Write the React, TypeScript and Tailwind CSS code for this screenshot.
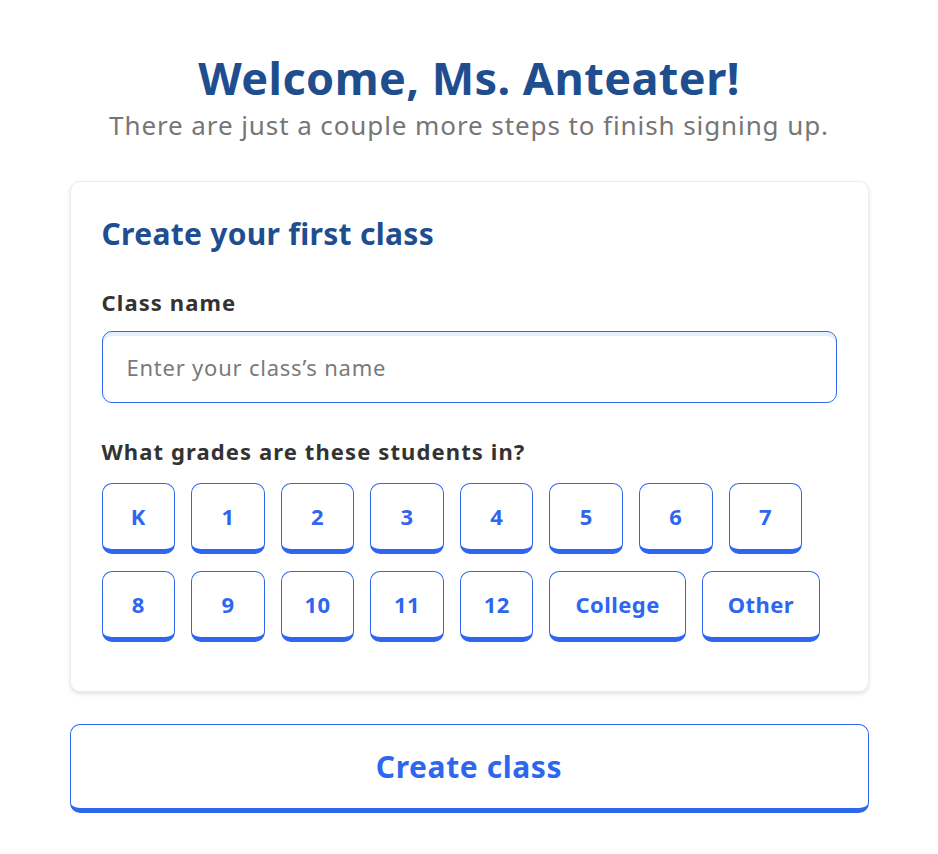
import { useState } from "react"

const grades = ["K", "1", "2", "3", "4", "5", "6", "7", "8", "9", "10", "11", "12", "College", "Other"]

function GradeButton({ label, active, onClick }: { label: string; active: boolean; onClick: () => void }) {
  const wide = label.length > 2
  return (
    <button
      onClick={onClick}
      className={`h-[71px] rounded-[10px] border border-b-[5px] border-[#2f66f0] text-[22px] font-bold tracking-[0.02em] ${
        wide ? "px-[25px]" : "w-[73.6px]"
      } ${active ? "bg-[#2f66f0] text-white" : "bg-white text-[#2f66f0]"}`}
    >
      {label}
    </button>
  )
}

export default function App() {
  const [name, setName] = useState("")
  const [selected, setSelected] = useState<string[]>([])

  const toggle = (g: string) => {
    setSelected((s) => (s.includes(g) ? s.filter((x) => x !== g) : [...s, g]))
  }

  return (
    <div className="min-h-[854px] bg-white font-['Noto_Sans','Lato',sans-serif]">
      <div className="mx-auto w-[799px] pt-[50px]">
        <h1 className="text-center text-[45px] font-bold leading-[56px] tracking-[0.01em] text-[#1f4e8f]">
          Welcome, Ms. Anteater!
        </h1>
        <p className="mt-[2px] text-center text-[26px] leading-[34px] tracking-[0.035em] text-[#767676]">
          There are just a couple more steps to finish signing up.
        </p>

        <div className="mt-[39px] rounded-[10px] border border-[#ececec] bg-white px-[31px] pt-[32px] pb-[49px] shadow-[0_2px_4px_rgba(0,0,0,0.12)]">
          <h2 className="text-[30px] font-bold leading-[40px] tracking-[0.01em] text-[#1f4e8f]">Create your first class</h2>

          <label className="mt-[33px] block text-[22px] font-bold leading-[30px] tracking-[0.05em] text-[#333333]">
            Class name
          </label>
          <input
            autoFocus
            value={name}
            onChange={(e) => setName(e.target.value)}
            placeholder="Enter your class’s name"
            className="mt-[14px] h-[72px] w-full rounded-[10px] border border-[#2f66f0] px-[24px] text-[22px] tracking-[0.035em] text-[#333] caret-[#333] shadow-[inset_0_4px_0_#e4f0fd] outline-none placeholder:text-[#7a7a7a]"
          />

          <p className="mt-[33px] text-[22px] font-bold leading-[30px] tracking-[0.05em] text-[#333333]">
            What grades are these students in?
          </p>
          <div className="mt-[17px] flex flex-wrap gap-x-[16px] gap-y-[17px]">
            {grades.map((g) => (
              <GradeButton key={g} label={g} active={selected.includes(g)} onClick={() => toggle(g)} />
            ))}
          </div>
        </div>

        <button className="mt-[32px] h-[89px] w-full rounded-[10px] border border-b-[5px] border-[#2f66f0] bg-white text-[30px] font-bold tracking-[0.02em] text-[#2f66f0]">
          Create class
        </button>
      </div>
    </div>
  )
}
